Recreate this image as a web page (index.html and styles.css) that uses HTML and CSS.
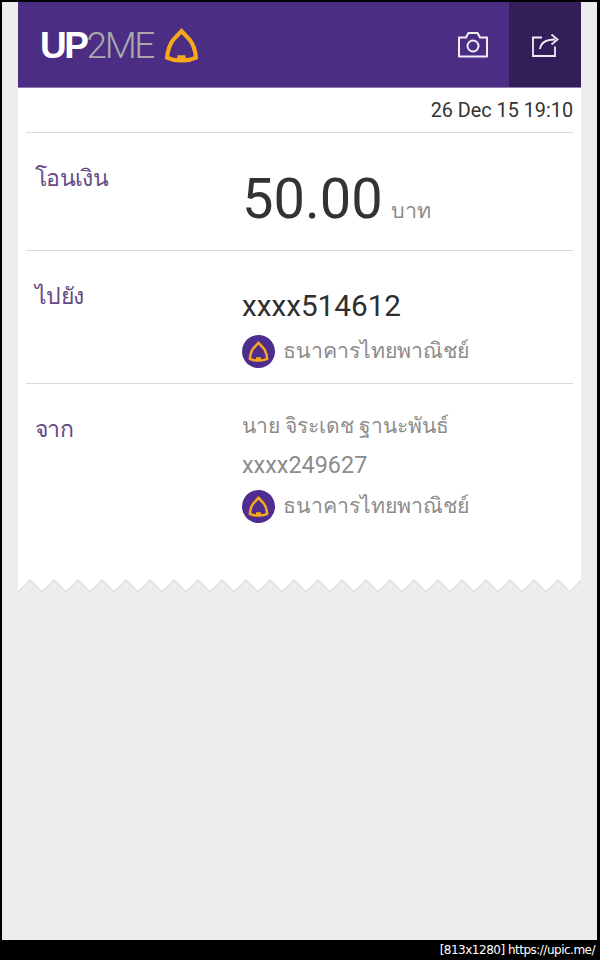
FILE: index.html
```html
<!DOCTYPE html>
<html lang="th">
<head>
<meta charset="utf-8">
<title>UP2ME</title>
<link rel="stylesheet" href="styles.css">
</head>
<body>
<svg class="defs" width="0" height="0" aria-hidden="true">
  <symbol id="sema" viewBox="0 0 34 34">
    <path d="M15 26.500V31.500C10 31.500 6.500 30.500 3 28.800C3.600 22 5.500 16 9 11.500L17 3L25 11.500C28.500 16 30.400 22 31 28.800C27.500 30.500 24 31.500 19 31.500V26.500" fill="none" stroke="currentColor" stroke-width="4" stroke-linejoin="miter"/>
  </symbol>
</svg>
<div class="screen">
  <main class="receipt">
    <header class="topbar">
      <div class="logo">
        <span class="logo-text"><b>UP</b><span class="logo-thin">2ME</span></span>
        <svg class="logo-mark"><use href="#sema"/></svg>
      </div>
      <div class="actions">
        <button class="action" aria-label="camera">
          <svg width="32" height="27" viewBox="0 0 32 27" fill="none" stroke="#f1edf5" stroke-width="2" stroke-linejoin="round"><path d="M2 6.500h7l2.400-4.500h9.200l2.400 4.500h7v19H2z"/><circle cx="16" cy="15" r="5.500"/></svg>
        </button>
        <button class="action action-active" aria-label="share">
          <svg width="28" height="26" viewBox="0 0 28 26" fill="none" stroke="#f1edf5" stroke-width="1.800"><path d="M11 5.500H2V24h22v-9.500"/><path d="M9 17c.8-6 5.500-9.500 15-9.500"/><path d="M20.500 2.500l6 5-6 5" stroke-linejoin="miter"/></svg>
        </button>
      </div>
    </header>
    <div class="stamp rule">26 Dec 15 19:10</div>
    <section class="row rule row-amount">
      <h2 class="label">โอนเงิน</h2>
      <div class="value amount"><span class="num">50.00</span><span class="unit">บาท</span></div>
    </section>
    <section class="row rule row-to">
      <h2 class="label">ไปยัง</h2>
      <div class="value">
        <div class="acct">xxxx514612</div>
        <div class="bank"><span class="badge"><svg class="badge-mark"><use href="#sema"/></svg></span>ธนาคารไทยพาณิชย์</div>
      </div>
    </section>
    <section class="row row-from">
      <h2 class="label">จาก</h2>
      <div class="value">
        <div class="line line-thai">นาย จิระเดช ฐานะพันธ์</div>
        <div class="line line-acct">xxxx249627</div>
        <div class="bank bank-tight"><span class="badge"><svg class="badge-mark"><use href="#sema"/></svg></span>ธนาคารไทยพาณิชย์</div>
      </div>
    </section>
    <svg class="zigzag" width="563" height="16" viewBox="0 0 563 16" aria-hidden="true">
      <path fill="#fff" d="M0 14L12 2 24 14 36 2 48 14 60 2 72 14 84 2 96 14 108 2 120 14 132 2 144 14 156 2 168 14 180 2 192 14 204 2 216 14 228 2 240 14 252 2 264 14 276 2 288 14 300 2 312 14 324 2 336 14 348 2 360 14 372 2 384 14 396 2 408 14 420 2 432 14 444 2 456 14 468 2 480 14 492 2 504 14 516 2 528 14 540 2 552 14 563 2V0H0Z"/>
      <path fill="none" stroke="#e0e0e0" stroke-width="1.500" d="M0 14L12 2 24 14 36 2 48 14 60 2 72 14 84 2 96 14 108 2 120 14 132 2 144 14 156 2 168 14 180 2 192 14 204 2 216 14 228 2 240 14 252 2 264 14 276 2 288 14 300 2 312 14 324 2 336 14 348 2 360 14 372 2 384 14 396 2 408 14 420 2 432 14 444 2 456 14 468 2 480 14 492 2 504 14 516 2 528 14 540 2 552 14 563 2"/>
    </svg>
  </main>
</div>
<footer class="strip">[813x1280] https://upic.me/</footer>
</body>
</html>
```
FILE: styles.css
```css
* { box-sizing: border-box; }
html, body { margin: 0; height: 960px; overflow: hidden; }
body {
  background: #000;
  font-family: Roboto, "Noto Sans", "DejaVu Sans", sans-serif;
  display: flex;
  flex-direction: column;
}
.defs { display: block; height: 0; }
.screen {
  height: 938px;
  margin: 2px 3px 0 2px;
  background: #ededed;
  padding: 0 16px;
  flex: none;
}
.receipt { width: 563px; }
.topbar {
  height: 86px;
  background: #4b2e83;
  border-bottom: 1px solid #8f7fae;
  display: flex;
  justify-content: space-between;
}
.logo { display: flex; align-items: center; gap: 11px; padding-left: 22px; padding-top: 2px; }
.logo-text {
  font-family: "Liberation Sans", Arial, sans-serif;
  font-size: 37px;
  letter-spacing: -2.400px;
  line-height: 1;
  color: #fff;
}
.logo-thin {
  font-family: Roboto, sans-serif;
  font-weight: 300;
  color: #a9a9ad;
}
.logo-mark { width: 35px; height: 35px; color: #f7a81b; }
.actions { display: flex; }
.action {
  width: 72px;
  height: 85px;
  border: 0;
  padding: 0;
  background: none;
  display: flex;
  align-items: center;
  justify-content: center;
}
.action-active { background: #321e58; }
.rule { position: relative; }
.rule::after {
  content: "";
  position: absolute;
  left: 8px;
  right: 8px;
  bottom: 0;
  height: 1px;
  background: #d9d9d9;
}
.stamp {
  height: 45px;
  padding: 11px 8px 0;
  background: #fff;
  text-align: right;
  font-size: 19.800px;
  line-height: 24px;
  color: #333;
}
.row {
  background: #fff;
  display: flex;
  padding-left: 17px;
  padding-top: 26px;
}
.row-amount { height: 118px; }
.row-to { height: 133px; }
.row-from { height: 194px; padding-top: 22px; }
.label {
  width: 207px;
  margin: 0;
  font-size: 23px;
  font-weight: 400;
  letter-spacing: -0.700px;
  line-height: 40px;
  color: #654c85;
}
.row-from .label { margin-top: 4px; }
.amount { display: flex; align-items: baseline; }
.num { font-size: 56px; line-height: 80px; color: #333; }
.unit { margin-left: 8px; font-size: 21.500px; color: #8c8c8c; }
.acct { font-size: 29.700px; line-height: 40px; color: #2f2f2f; margin-top: 9px; }
.bank {
  display: flex;
  align-items: center;
  gap: 8px;
  font-size: 21.300px;
  line-height: 34px;
  color: #8c8c8c;
  margin-top: 8px;
}
.bank-tight { margin-top: 4px; }
.badge {
  width: 33px;
  height: 33px;
  border-radius: 50%;
  background: #4f2d8f;
  display: flex;
  align-items: center;
  justify-content: center;
}
.badge-mark { width: 21px; height: 21px; color: #f7a81b; }
.line { font-size: 23.400px; line-height: 40px; color: #8c8c8c; }
.line-thai { font-size: 21px; }
.line-acct { line-height: 39px; }
.zigzag { display: block; }
.strip {
  height: 20px;
  flex: none;
  text-align: right;
  padding-right: 5px;
  color: #fff;
  font-family: "DejaVu Sans", sans-serif;
  font-size: 12px;
  line-height: 20px;
  letter-spacing: -0.500px;
}
```
